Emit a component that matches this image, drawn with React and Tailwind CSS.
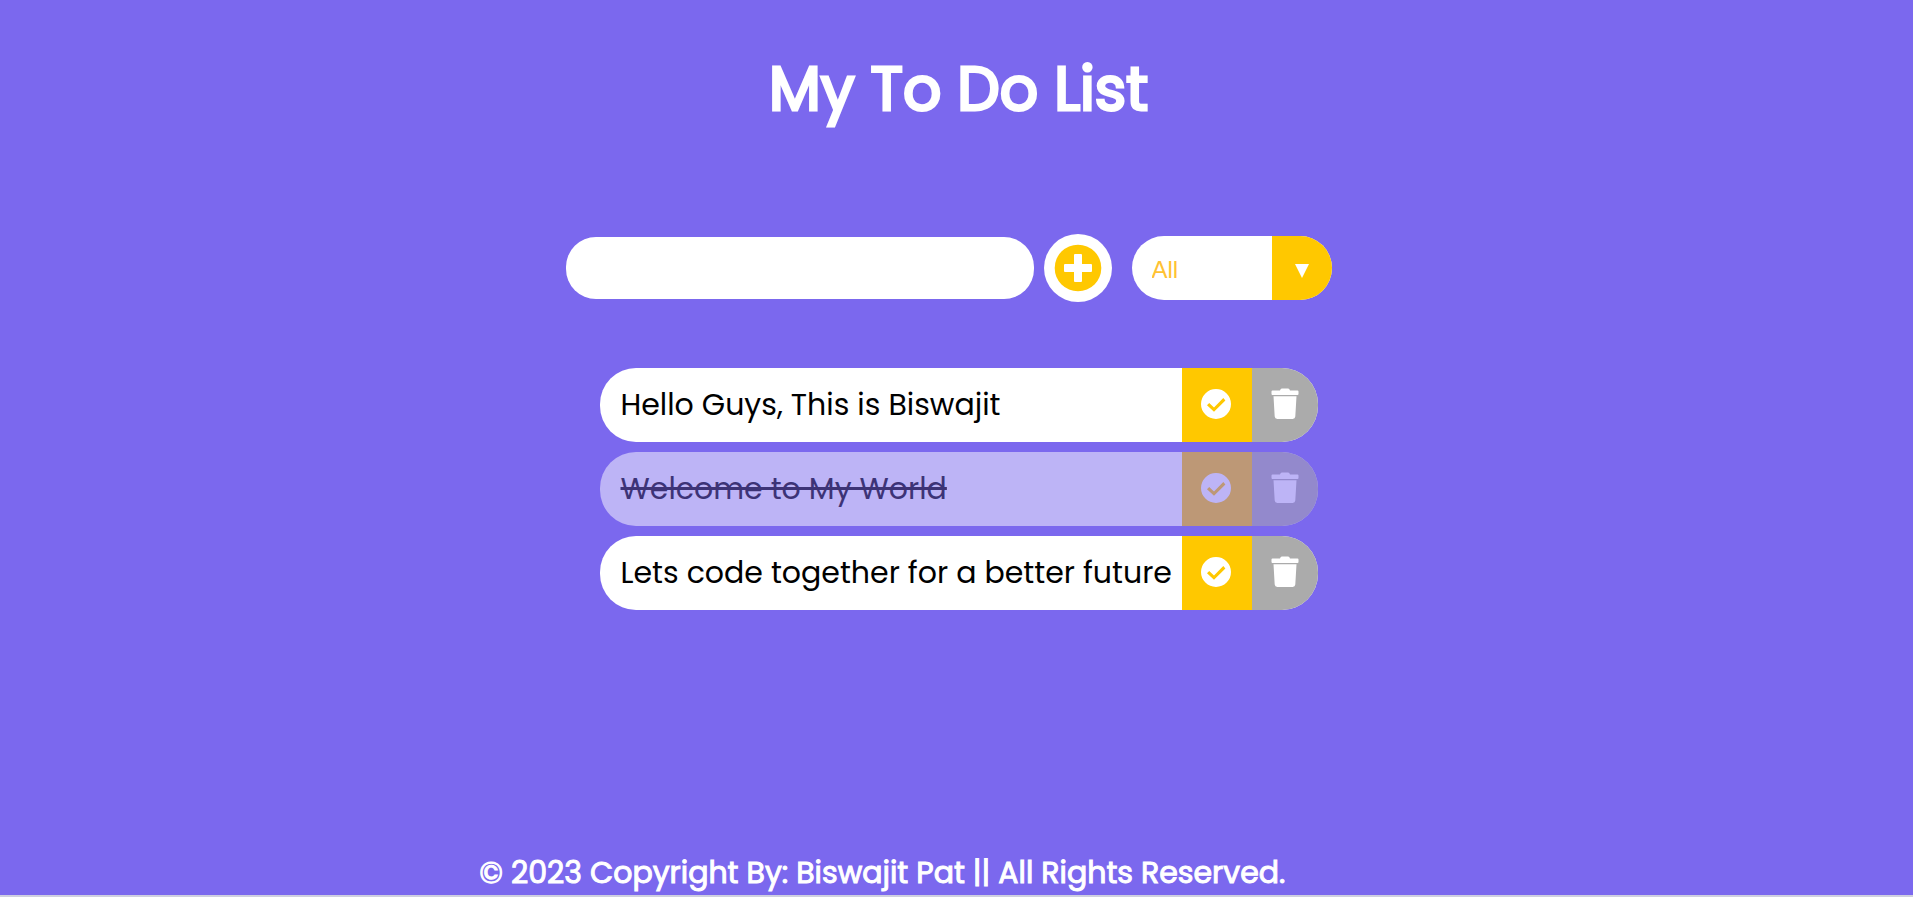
import { useState } from "react";

const initialTodos = [
  { id: 1, text: "Hello Guys, This is Biswajit", completed: false },
  { id: 2, text: "Welcome to My World", completed: true },
  { id: 3, text: "Lets code together for a better future", completed: false },
];

function PlusCircleIcon() {
  return (
    <svg viewBox="0 0 48 48" className="size-12" aria-hidden="true">
      <circle cx="24" cy="24" r="23.3" fill="#ffc800" />
      <path
        fill="#fff"
        d="M21 10h6a1 1 0 0 1 1 1v9h9a1 1 0 0 1 1 1v6a1 1 0 0 1-1 1h-9v9a1 1 0 0 1-1 1h-6a1 1 0 0 1-1-1v-9h-9a1 1 0 0 1-1-1v-6a1 1 0 0 1 1-1h9v-9a1 1 0 0 1 1-1z"
      />
    </svg>
  );
}

function CheckCircleIcon() {
  return (
    <svg viewBox="0 0 30 30" className="size-[30px]" aria-hidden="true">
      <path
        fill="currentColor"
        fillRule="evenodd"
        d="M15 0a15 15 0 1 1 0 30a15 15 0 0 1 0-30zM22.3 9.1L13 18.4L8.2 14L6 16.2L13 22.8L24.4 11.4z"
      />
    </svg>
  );
}

function TrashIcon() {
  return (
    <svg viewBox="0 0 28 32" className="h-8 w-7" aria-hidden="true">
      <path
        fill="currentColor"
        d="M1.5 2.5H9l.6-1.2A1.6 1.6 0 0 1 11 .5h6a1.6 1.6 0 0 1 1.4.8l.6 1.2h7.5a1 1 0 0 1 1 1V6a1 1 0 0 1-1 1h-25a1 1 0 0 1-1-1V3.5a1 1 0 0 1 1-1zM2.5 8.3h23l-1.2 20.2a2.7 2.7 0 0 1-2.6 2.5H6.3a2.7 2.7 0 0 1-2.6-2.5z"
      />
    </svg>
  );
}

function TodoItem({ todo, onToggle, onDelete }) {
  return (
    <li
      className={
        todo.completed
          ? "flex overflow-hidden rounded-[36px] bg-white opacity-50"
          : "flex overflow-hidden rounded-[36px] bg-white"
      }
    >
      <span
        className={
          todo.completed
            ? "flex-1 py-4 pl-[21px] text-3xl/[42px] text-black line-through"
            : "flex-1 py-4 pl-[21px] text-3xl/[42px] text-black"
        }
      >
        {todo.text}
      </span>
      <button
        type="button"
        aria-label="Complete task"
        onClick={onToggle}
        className="flex w-[70px] items-center justify-center bg-[#ffc800] pr-0.5 pb-0.5 text-white"
      >
        <CheckCircleIcon />
      </button>
      <button
        type="button"
        aria-label="Delete task"
        onClick={onDelete}
        className="flex w-[66px] items-center justify-center bg-[#ababab] pb-0.5 text-white"
      >
        <TrashIcon />
      </button>
    </li>
  );
}

export default function App() {
  const [todos, setTodos] = useState(initialTodos);
  const [text, setText] = useState("");
  const [filter, setFilter] = useState("all");

  const addTodo = (event) => {
    event.preventDefault();
    if (!text.trim()) return;
    setTodos([...todos, { id: Date.now(), text, completed: false }]);
    setText("");
  };

  const toggle = (id) =>
    setTodos(todos.map((t) => (t.id === id ? { ...t, completed: !t.completed } : t)));

  const visible = todos.filter(
    (t) => filter === "all" || (filter === "completed") === t.completed,
  );

  return (
    <div className="flex min-h-screen flex-col border-b-2 border-[#cfcfe0] bg-[#7b68ee] font-[Poppins,Inter,sans-serif] text-white">
      <header className="flex justify-center pt-[47px] pl-1">
        <h1 className="text-6xl/[84px] font-normal [-webkit-text-stroke:3px_currentColor]">
          My To Do List
        </h1>
      </header>

      <main className="flex flex-1 flex-col items-center">
        <form onSubmit={addTodo} className="mt-[103px] flex items-center pr-4">
          <input
            type="text"
            aria-label="New task"
            value={text}
            onChange={(e) => setText(e.target.value)}
            className="h-[62px] w-[468px] rounded-[30px] bg-white px-5 text-3xl text-black outline-none"
          />
          <button
            type="submit"
            aria-label="Add task"
            className="ml-2.5 flex size-[68px] items-center justify-center rounded-full bg-white"
          >
            <PlusCircleIcon />
          </button>
          <div className="relative ml-5 w-[200px] overflow-hidden rounded-[32px]">
            <select
              aria-label="Filter tasks"
              value={filter}
              onChange={(e) => setFilter(e.target.value)}
              className="h-16 w-full appearance-none bg-white pt-1 pl-5 font-['Liberation_Sans',Arial,sans-serif] text-2xl text-[#ffc233] outline-none"
            >
              <option value="all">All</option>
              <option value="completed">Completed</option>
              <option value="uncompleted">Uncompleted</option>
            </select>
            <span className="pointer-events-none absolute inset-y-0 right-0 flex w-[60px] items-center justify-center bg-[#ffc800] pt-1.5">
              <svg viewBox="0 0 14 14" className="size-3.5" aria-hidden="true">
                <path fill="#fff" d="M0 0h14L7 14z" />
              </svg>
            </span>
          </div>
        </form>

        <ul className="mt-[66px] ml-1 flex w-[718px] flex-col gap-2.5">
          {visible.map((todo) => (
            <TodoItem
              key={todo.id}
              todo={todo}
              onToggle={() => toggle(todo.id)}
              onDelete={() => setTodos(todos.filter((t) => t.id !== todo.id))}
            />
          ))}
        </ul>
      </main>

      <footer className="pl-[25%]">
        <p className="pl-px text-3xl/[44px] font-normal [-webkit-text-stroke:1px_currentColor]">
          © 2023 Copyright By: Biswajit Pat || All Rights Reserved.
        </p>
      </footer>
    </div>
  );
}
